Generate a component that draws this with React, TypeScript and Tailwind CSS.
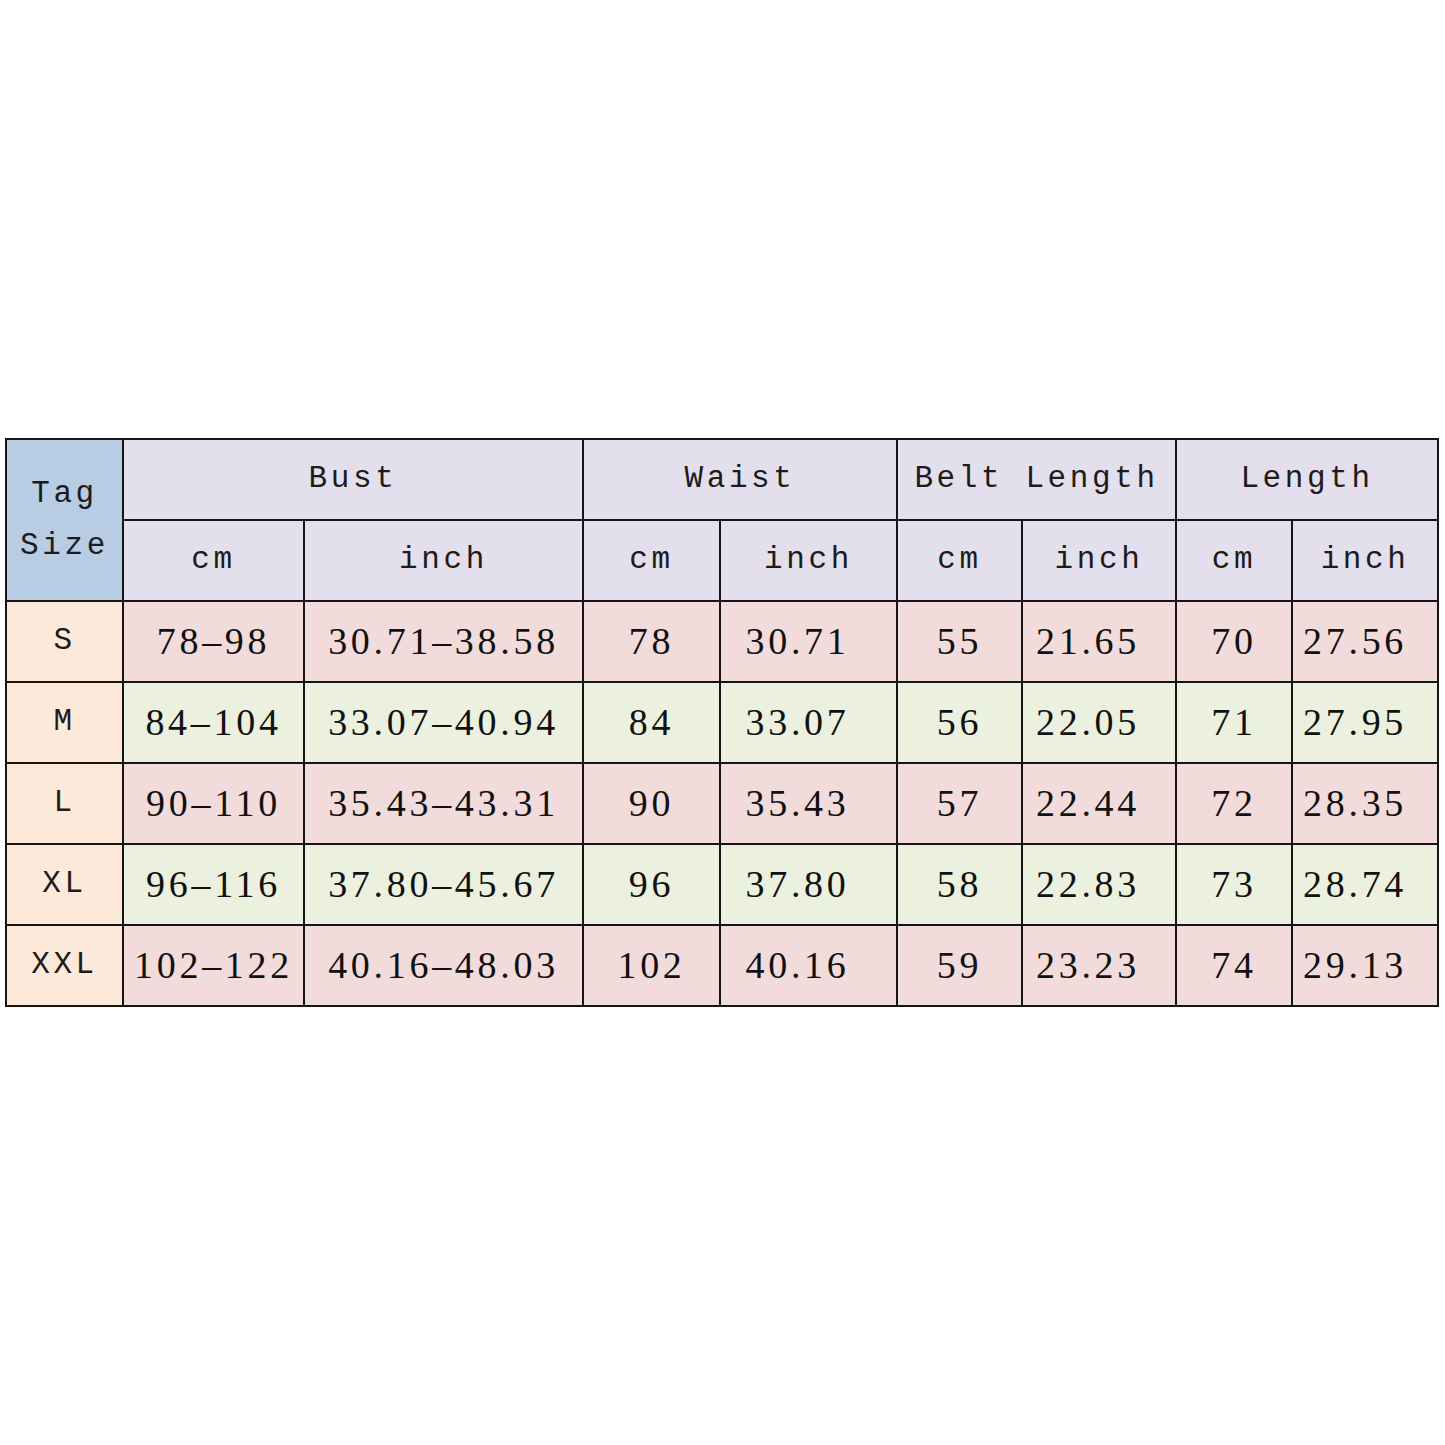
import React from 'react'

type Row = {
  size: string
  bust: [string, string]
  waist: [string, string]
  belt: [string, string]
  length: [string, string]
}

const rows: Row[] = [
  { size: 'S', bust: ['78–98', '30.71–38.58'], waist: ['78', '30.71'], belt: ['55', '21.65'], length: ['70', '27.56'] },
  { size: 'M', bust: ['84–104', '33.07–40.94'], waist: ['84', '33.07'], belt: ['56', '22.05'], length: ['71', '27.95'] },
  { size: 'L', bust: ['90–110', '35.43–43.31'], waist: ['90', '35.43'], belt: ['57', '22.44'], length: ['72', '28.35'] },
  { size: 'XL', bust: ['96–116', '37.80–45.67'], waist: ['96', '37.80'], belt: ['58', '22.83'], length: ['73', '28.74'] },
  { size: 'XXL', bust: ['102–122', '40.16–48.03'], waist: ['102', '40.16'], belt: ['59', '23.23'], length: ['74', '29.13'] },
]

const mono = "font-['Liberation_Mono','Courier_New',monospace] text-[31px] tracking-[3.6px] text-[#1c1c1c]"
const serif = "font-['Liberation_Serif','Times_New_Roman',serif] text-[38px] tracking-[3.7px] text-[#111]"
const cell = 'border-2 border-[#151515] text-center align-middle whitespace-nowrap p-0 h-[81px]'

export default function App() {
  return (
    <div className="min-h-[1445px] w-[1445px] bg-white pt-[438px] pl-[5px]">
      <table className="table-fixed border-collapse w-[1432px]">
        <colgroup>
          <col className="w-[117px]" />
          <col className="w-[181px]" />
          <col className="w-[279px]" />
          <col className="w-[137px]" />
          <col className="w-[177px]" />
          <col className="w-[125px]" />
          <col className="w-[154px]" />
          <col className="w-[116px]" />
          <col className="w-[146px]" />
        </colgroup>
        <thead>
          <tr>
            <th rowSpan={2} className={`${cell} ${mono} font-normal bg-[#b8cce4] leading-[52px]`}>
              Tag<br />Size
            </th>
            <th colSpan={2} className={`${cell} ${mono} font-normal bg-[#e4dfec]`}>Bust</th>
            <th colSpan={2} className={`${cell} ${mono} font-normal bg-[#e4dfec]`}>Waist</th>
            <th colSpan={2} className={`${cell} ${mono} font-normal bg-[#e4dfec]`}>Belt Length</th>
            <th colSpan={2} className={`${cell} ${mono} font-normal bg-[#e4dfec]`}>Length</th>
          </tr>
          <tr>
            {['cm', 'inch', 'cm', 'inch', 'cm', 'inch', 'cm', 'inch'].map((t, i) => (
              <th key={i} className={`${cell} ${mono} font-normal bg-[#e4dfec]`}>{t}</th>
            ))}
          </tr>
        </thead>
        <tbody>
          {rows.map((r, i) => {
            const bg = i % 2 === 0 ? 'bg-[#f2dcdb]' : 'bg-[#ebf1de]'
            return (
              <tr key={r.size}>
                <td className={`${cell} ${mono} bg-[#fde9d9]`}>{r.size}</td>
                <td className={`${cell} ${serif} ${bg}`}>{r.bust[0]}</td>
                <td className={`${cell} ${serif} ${bg}`}>{r.bust[1]}</td>
                <td className={`${cell} ${serif} ${bg}`}>{r.waist[0]}</td>
                <td className={`${cell} ${serif} ${bg} pr-[22px]`}>{r.waist[1]}</td>
                <td className={`${cell} ${serif} ${bg}`}>{r.belt[0]}</td>
                <td className={`${cell} ${serif} ${bg} pr-[22px]`}>{r.belt[1]}</td>
                <td className={`${cell} ${serif} ${bg}`}>{r.length[0]}</td>
                <td className={`${cell} ${serif} ${bg} pr-[20px]`}>{r.length[1]}</td>
              </tr>
            )
          })}
        </tbody>
      </table>
    </div>
  )
}
